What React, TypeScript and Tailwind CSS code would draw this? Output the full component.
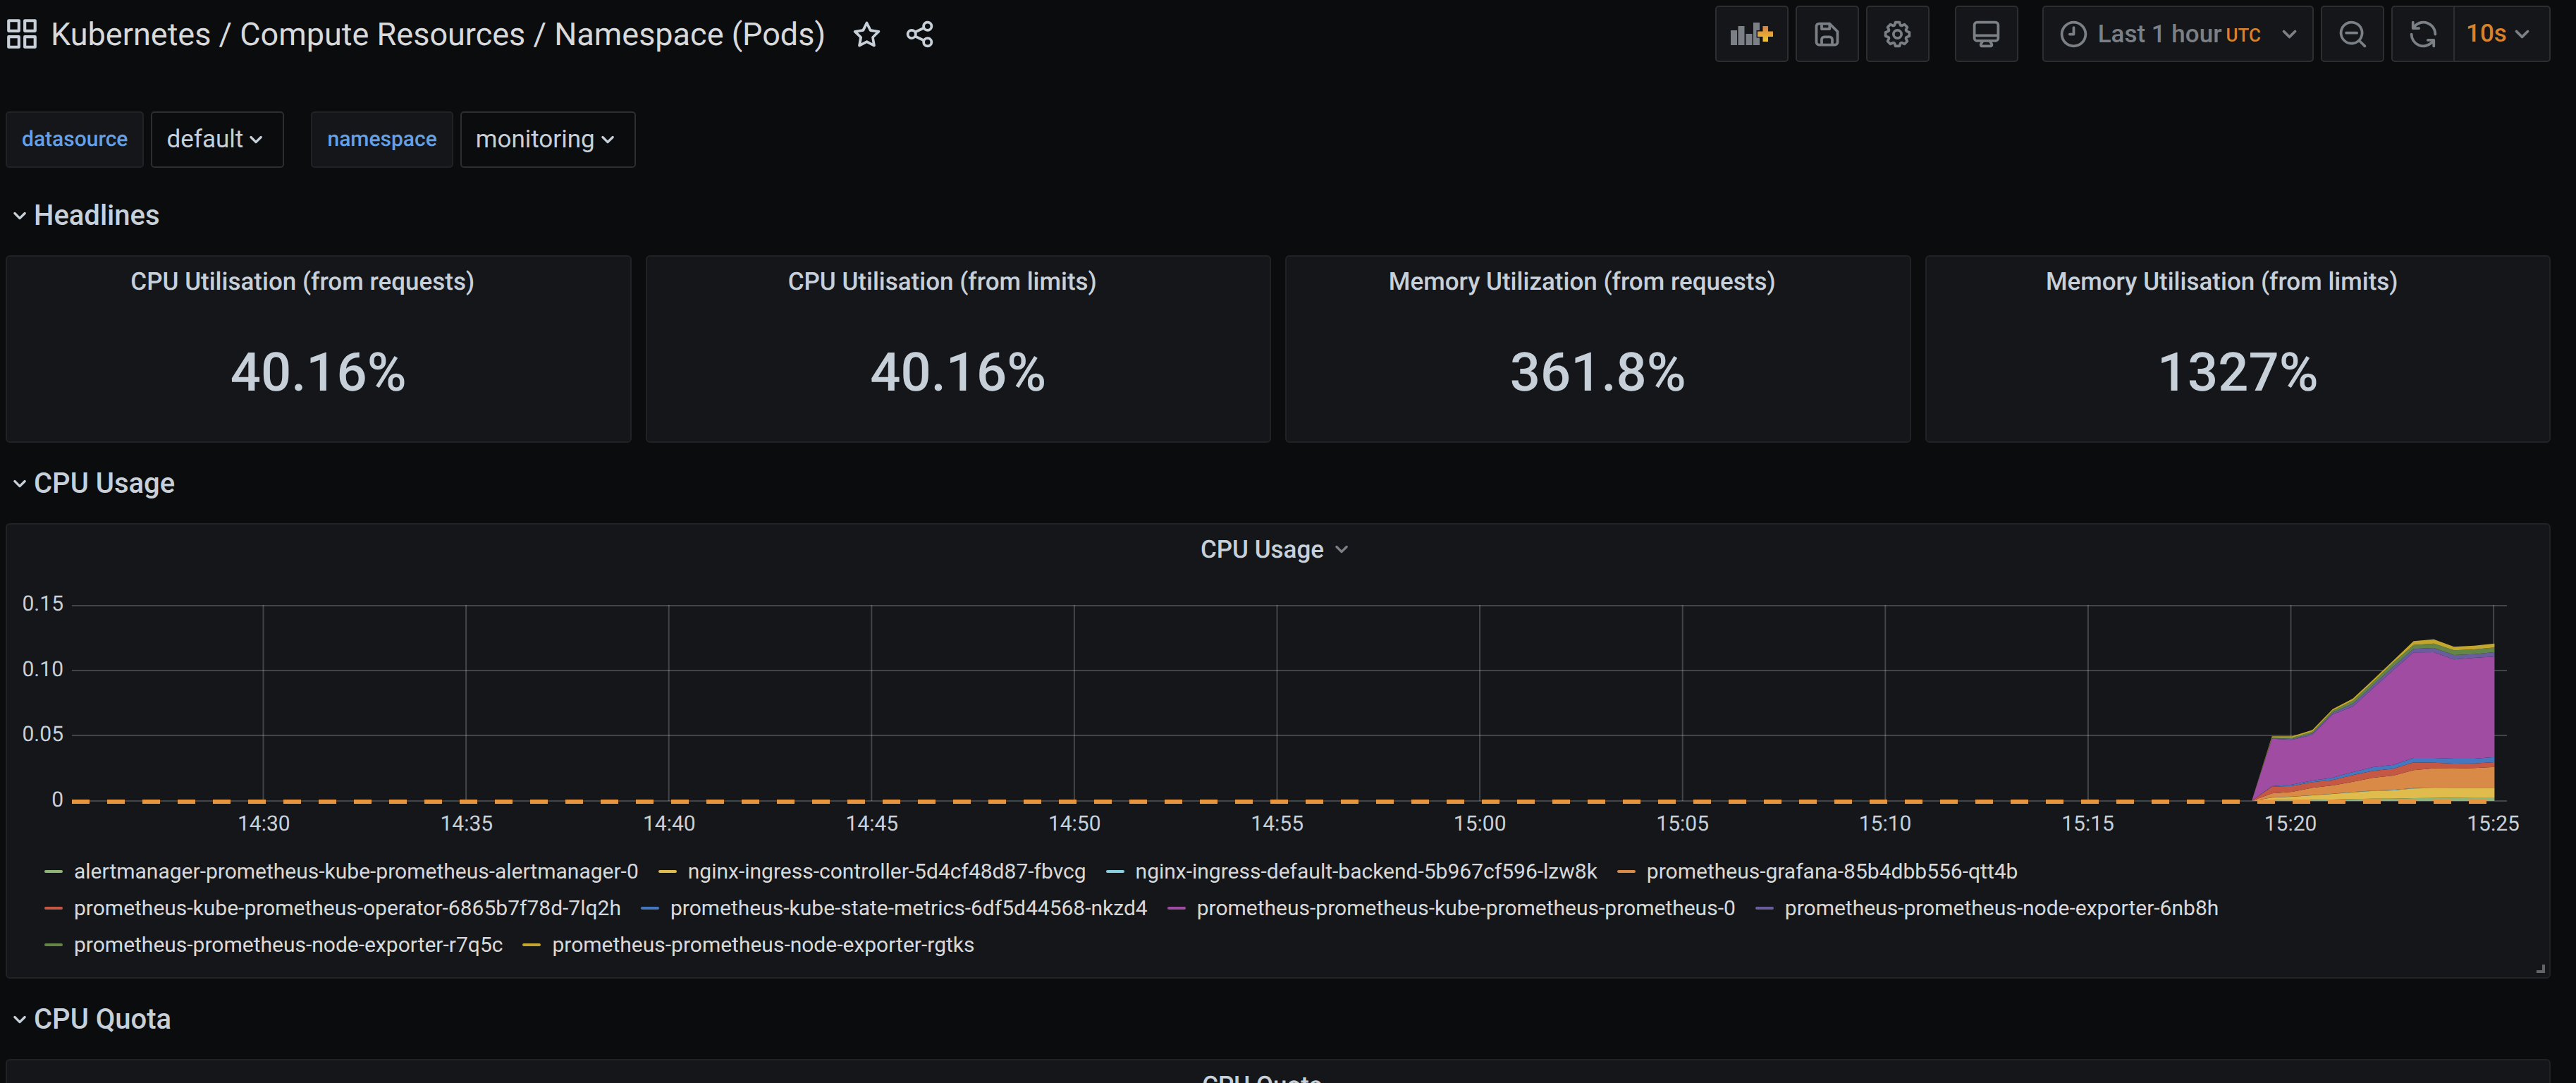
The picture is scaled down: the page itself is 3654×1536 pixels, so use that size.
import type { ReactNode } from "react";

const ICONS = {
  apps: "M10,13H3a1,1,0,0,0-1,1v7a1,1,0,0,0,1,1h7a1,1,0,0,0,1-1V14A1,1,0,0,0,10,13ZM9,20H4V15H9ZM21,2H14a1,1,0,0,0-1,1v7a1,1,0,0,0,1,1h7a1,1,0,0,0,1-1V3A1,1,0,0,0,21,2ZM20,9H15V4h5Zm1,4H14a1,1,0,0,0-1,1v7a1,1,0,0,0,1,1h7a1,1,0,0,0,1-1V14A1,1,0,0,0,21,13Zm-1,7H15V15h5ZM10,2H3A1,1,0,0,0,2,3v7a1,1,0,0,0,1,1h7a1,1,0,0,0,1-1V3A1,1,0,0,0,10,2ZM9,9H4V4H9Z",
  star: "M22,9.67A1,1,0,0,0,21.14,9l-5.69-.83L12.9,3a1,1,0,0,0-1.8,0L8.55,8.16,2.86,9a1,1,0,0,0-.81.68,1,1,0,0,0,.25,1l4.13,4-1,5.68A1,1,0,0,0,6.9,21.44L12,18.77l5.1,2.67a.93.93,0,0,0,.46.12,1,1,0,0,0,.59-.19,1,1,0,0,0,.4-1l-1-5.68,4.13-4A1,1,0,0,0,22,9.67Zm-6.15,4a1,1,0,0,0-.29.88l.72,4.2-3.76-2a1.06,1.06,0,0,0-.94,0l-3.76,2,.72-4.2a1,1,0,0,0-.29-.88l-3-3,4.21-.61a1,1,0,0,0,.76-.55L12,5.7l1.88,3.82a1,1,0,0,0,.76.55l4.21.61Z",
  share: "M18,14a4,4,0,0,0-3.08,1.48l-5.1-2.35a3.64,3.64,0,0,0,0-2.26l5.1-2.35A4,4,0,1,0,14,6a4.17,4.17,0,0,0,.07.71L8.79,9.14a4,4,0,1,0,0,5.72l5.28,2.43A4.17,4.17,0,0,0,14,18a4,4,0,1,0,4-4ZM18,4a2,2,0,1,1-2,2A2,2,0,0,1,18,4ZM6,14a2,2,0,1,1,2-2A2,2,0,0,1,6,14Zm12,6a2,2,0,1,1,2-2A2,2,0,0,1,18,20Z",
  save: "M20.71,9.29l-6-6a1,1,0,0,0-.32-.21A1.09,1.09,0,0,0,14,3H6A3,3,0,0,0,3,6V18a3,3,0,0,0,3,3H18a3,3,0,0,0,3-3V10A1,1,0,0,0,20.71,9.29ZM9,5h4V7H9Zm6,14H9V16a1,1,0,0,1,1-1h4a1,1,0,0,1,1,1Zm4-1a1,1,0,0,1-1,1H17V16a3,3,0,0,0-3-3H10a3,3,0,0,0-3,3v3H6a1,1,0,0,1-1-1V6A1,1,0,0,1,6,5H7V8A1,1,0,0,0,8,9h6a1,1,0,0,0,1-1V6.41l4,4Z",
  cog: "M21.32,9.55l-1.89-.63.89-1.78A1,1,0,0,0,20.13,6L18,3.87a1,1,0,0,0-1.15-.19l-1.78.89-.63-1.89A1,1,0,0,0,13.5,2h-3a1,1,0,0,0-.95.68L8.92,4.57,7.14,3.68A1,1,0,0,0,6,3.87L3.87,6a1,1,0,0,0-.19,1.15l.89,1.78-1.89.63A1,1,0,0,0,2,10.5v3a1,1,0,0,0,.68.95l1.89.63-.89,1.78A1,1,0,0,0,3.87,18L6,20.13a1,1,0,0,0,1.15.19l1.78-.89.63,1.89a1,1,0,0,0,.95.68h3a1,1,0,0,0,.95-.68l.63-1.89,1.78.89A1,1,0,0,0,18,20.13L20.13,18a1,1,0,0,0,.19-1.15l-.89-1.78,1.89-.63A1,1,0,0,0,22,13.5v-3A1,1,0,0,0,21.32,9.55ZM20,12.78l-1.2.4A2,2,0,0,0,17.64,16l.57,1.14-1.1,1.1L16,17.64a2,2,0,0,0-2.79,1.16l-.4,1.2H11.22l-.4-1.2A2,2,0,0,0,8,17.64l-1.14.57-1.1-1.1L6.36,16A2,2,0,0,0,5.2,13.18L4,12.78V11.22l1.2-.4A2,2,0,0,0,6.36,8L5.79,6.89l1.1-1.1L8,6.36A2,2,0,0,0,10.82,5.2l.4-1.2h1.56l.4,1.2A2,2,0,0,0,16,6.36l1.14-.57,1.1,1.1L17.64,8a2,2,0,0,0,1.16,2.79l1.2.4ZM12,8a4,4,0,1,0,4,4A4,4,0,0,0,12,8Zm0,6a2,2,0,1,1,2-2A2,2,0,0,1,12,14Z",
  monitor: "M19,2H5A3,3,0,0,0,2,5V15a3,3,0,0,0,3,3H7.64l-.58,1a2,2,0,0,0,0,2,2,2,0,0,0,1.75,1h6.46A2,2,0,0,0,17,21a2,2,0,0,0,0-2l-.59-1H19a3,3,0,0,0,3-3V5A3,3,0,0,0,19,2ZM8.77,20,10,18H14l1.2,2ZM20,15a1,1,0,0,1-1,1H5a1,1,0,0,1-1-1V14H20Zm0-3H4V5A1,1,0,0,1,5,4H19a1,1,0,0,1,1,1Z",
  clock: "M12,2A10,10,0,1,0,22,12,10,10,0,0,0,12,2Zm0,18a8,8,0,1,1,8-8A8,8,0,0,1,12,20ZM12,6a1,1,0,0,0-1,1v4H9a1,1,0,0,0,0,2h3a1,1,0,0,0,1-1V7A1,1,0,0,0,12,6Z",
  down: "M17,9.17a1,1,0,0,0-1.41,0L12,12.71,8.46,9.17a1,1,0,0,0-1.41,0,1,1,0,0,0,0,1.42l4.24,4.24a1,1,0,0,0,1.42,0L17,10.59A1,1,0,0,0,17,9.17Z",
  zoomOut: "M21.71,20.29,18,16.61A9,9,0,1,0,16.61,18l3.68,3.68a1,1,0,0,0,1.42,0A1,1,0,0,0,21.71,20.29ZM11,18a7,7,0,1,1,7-7A7,7,0,0,1,11,18Zm4-8H7a1,1,0,0,0,0,2h8a1,1,0,0,0,0-2Z",
  sync: "M19.91,15.51H15.38a1,1,0,0,0,0,2h2.4A8,8,0,0,1,4,12a1,1,0,0,0-2,0,10,10,0,0,0,16.88,7.23V21a1,1,0,0,0,2,0V16.5A1,1,0,0,0,19.91,15.51ZM12,2A10,10,0,0,0,5.12,4.77V3a1,1,0,0,0-2,0V7.5a1,1,0,0,0,1,1h4.5a1,1,0,0,0,0-2H6.22A8,8,0,0,1,20,12a1,1,0,0,0,2,0A10,10,0,0,0,12,2Z",
};

function Icon({ name, className = "size-[45px]" }: { name: keyof typeof ICONS; className?: string }) {
  return (
    <svg viewBox="0 0 24 24" fill="currentColor" aria-hidden="true" className={`shrink-0 ${className}`}>
      <path d={ICONS[name]} />
    </svg>
  );
}

function AddPanelIcon() {
  return (
    <svg viewBox="0 0 60 32" className="h-8 w-[60px]" aria-hidden="true">
      <defs>
        <linearGradient id="plus" x1="0" y1="0" x2="0" y2="1">
          <stop offset="0" stopColor="#d9803f" />
          <stop offset="1" stopColor="#efc52f" />
        </linearGradient>
      </defs>
      <path fill="currentColor" d="M0 11h9v21H0zM10.5 5h9v27h-9zM21.500 16h9v16h-9zM32 0h9v32h-9z" />
      <path
        d="M45.500 5h7.500v7.500h7V20h-7v7h-7.500v-7H38v-7.500h7.500z"
        fill="url(#plus)"
        stroke="#141619"
        strokeWidth="3"
        paintOrder="stroke"
      />
    </svg>
  );
}

function ToolButton({ label, className = "w-[90px]", children }: { label: string; className?: string; children: ReactNode }) {
  return (
    <button
      type="button"
      aria-label={label}
      className={`flex h-20 items-center justify-center rounded-[5px] border-2 border-[#2c2e31] bg-[#141619] ${className}`}
    >
      {children}
    </button>
  );
}

function Header() {
  return (
    <header className="flex h-24 items-center justify-between">
      <div className="flex items-center text-[#c7d0d9]">
        <Icon name="apps" className="-ml-0.5 size-[50px]" />
        <h1 className="ml-4 text-[45px] leading-none text-[#d8d9da]">
          Kubernetes / Compute Resources / Namespace (Pods)
        </h1>
        <button type="button" aria-label="Mark as favorite" className="ml-9">
          <Icon name="star" />
        </button>
        <button type="button" aria-label="Share dashboard" className="ml-[30px]">
          <Icon name="share" />
        </button>
      </div>

      <div className="flex items-center text-[#7b8087]">
        <div className="flex gap-[10px]">
          <ToolButton label="Add panel" className="w-[104px]">
            <AddPanelIcon />
          </ToolButton>
          <ToolButton label="Save dashboard">
            <Icon name="save" />
          </ToolButton>
          <ToolButton label="Dashboard settings">
            <Icon name="cog" />
          </ToolButton>
        </div>
        <div className="ml-9">
          <ToolButton label="Cycle view mode">
            <Icon name="monitor" />
          </ToolButton>
        </div>
        <div className="ml-[34px] flex gap-[10px]">
          <ToolButton label="Time range: last 1 hour UTC" className="pr-[10px] pl-5">
            <Icon name="clock" />
            <span className="ml-3 text-[35px] leading-none font-medium">Last 1 hour</span>
            <span className="mt-1 ml-[6px] text-[26px] leading-none font-medium text-[#d9822b]">UTC</span>
            <Icon name="down" className="ml-[18px] size-[45px]" />
          </ToolButton>
          <ToolButton label="Zoom out time range">
            <Icon name="zoomOut" />
          </ToolButton>
          <div className="flex h-20 overflow-hidden rounded-[5px] border-2 border-[#2c2e31] bg-[#141619]">
            <button
              type="button"
              aria-label="Refresh dashboard"
              className="flex w-[88px] items-center justify-center border-r-2 border-[#2c2e31]"
            >
              <Icon name="sync" />
            </button>
            <div className="relative flex">
              <select
                aria-label="Refresh interval"
                className="appearance-none bg-transparent pr-[60px] pl-4 text-[35px] font-medium text-[#d9822b]"
              >
                <option>10s</option>
              </select>
              <Icon name="down" className="pointer-events-none absolute top-4 right-4 size-[45px]" />
            </div>
          </div>
        </div>
      </div>
    </header>
  );
}

function Variable({ name, value }: { name: string; value: string }) {
  return (
    <div className="flex gap-[10px]">
      <label
        htmlFor={name}
        className="flex h-20 items-center rounded-[5px] border-2 border-[#202226] bg-[#141619] px-[21px] text-[30px] leading-none font-medium text-[#64a0e6]"
      >
        {name}
      </label>
      <div className="relative flex text-[#c7d0d9]">
        <select
          id={name}
          className="h-20 appearance-none rounded-[5px] border-2 border-[#2c2e31] bg-[#0b0c0e] pr-[56px] pl-5 text-[35px]"
        >
          <option>{value}</option>
        </select>
        <Icon name="down" className="pointer-events-none absolute top-5 right-5 size-10" />
      </div>
    </div>
  );
}

function RowTitle({ children }: { children: ReactNode }) {
  return (
    <h2 className="flex h-[114px] items-center pt-0.5 text-[40px] leading-none font-medium text-[#c7d0d9]">
      <button type="button" className="flex items-center">
        <Icon name="down" className="size-10" />
        {children}
      </button>
    </h2>
  );
}

function Panel({ title, chevron = false, children }: { title: string; chevron?: boolean; children?: ReactNode }) {
  return (
    <section className="relative rounded-[6px] border-2 border-[#202226] bg-[#141619]">
      <h3 className="flex h-[70px] items-center justify-center text-[35px] leading-none font-medium text-[#c7d0d9]">
        {title}
        <Icon name="down" className={chevron ? "ml-[5px] size-10 text-[#7b8087]" : "invisible ml-[5px] size-10"} />
      </h3>
      {children}
    </section>
  );
}

const STATS = [
  { title: "CPU Utilisation (from requests)", value: "40.16%" },
  { title: "CPU Utilisation (from limits)", value: "40.16%" },
  { title: "Memory Utilization (from requests)", value: "361.8%" },
  { title: "Memory Utilisation (from limits)", value: "1327%" },
];

// Cumulative top edge of each stacked band, one value per 30 s sample.
const BANDS = [
  { name: "alertmanager-prometheus-kube-prometheus-alertmanager-0", color: "#8fb477", tops: [0, 4, 4, 5, 6, 8, 10, 10, 12, 13, 14, 15, 15] },
  { name: "nginx-ingress-controller-5d4cf48d87-fbvcg", color: "#dfbc4b", tops: [0, 14, 18, 24, 30, 37, 43, 45, 53, 55, 54, 54, 54] },
  { name: "nginx-ingress-default-backend-5b967cf596-lzw8k", color: "#88cfe0", tops: [0, 15, 19, 25, 31, 38, 44, 47, 55, 57, 56, 56, 56] },
  { name: "prometheus-grafana-85b4dbb556-qtt4b", color: "#d98a47", tops: [0, 32, 39, 56, 66, 82, 99, 108, 131, 139, 138, 140, 145] },
  { name: "prometheus-kube-prometheus-operator-6865b7f78d-7lq2h", color: "#c55844", tops: [0, 61, 64, 80, 89, 110, 128, 137, 164, 163, 159, 160, 165] },
  { name: "prometheus-kube-state-metrics-6df5d44568-nkzd4", color: "#4678c2", tops: [0, 63, 70, 87, 99, 123, 144, 154, 183, 183, 180, 180, 187] },
  { name: "prometheus-prometheus-kube-prometheus-prometheus-0", color: "#a14ca3", tops: [0, 265, 260, 281, 368, 402, 480, 557, 632, 633, 602, 609, 614] },
  { name: "prometheus-prometheus-node-exporter-6nb8h", color: "#6a5d9d", tops: [0, 267, 264, 288, 376, 414, 493, 572, 647, 651, 621, 625, 633] },
  { name: "prometheus-prometheus-node-exporter-r7q5c", color: "#648547", tops: [0, 271, 269, 295, 384, 427, 507, 589, 664, 670, 641, 645, 653] },
  { name: "prometheus-prometheus-node-exporter-rgtks", color: "#c2a62e", tops: [0, 275, 275, 302, 391, 436, 516, 598, 680, 688, 656, 661, 670] },
];

const TIMES = ["14:30", "14:35", "14:40", "14:45", "14:50", "14:55", "15:00", "15:05", "15:10", "15:15", "15:20", "15:25"];

const BASE = 278;
const sampleX = (i: number) => 3092 + i * 28.7;
const bandPath = (index: number) => {
  const upper = BANDS[index].tops.map((v, i) => `${sampleX(i)},${BASE - v / 3}`);
  const lower = (index > 0 ? BANDS[index - 1].tops : BANDS[0].tops.map(() => 0))
    .map((v, i) => `${sampleX(i)},${BASE - v / 3}`)
    .reverse();
  return [...upper, ...lower].join(" ");
};

function Chart() {
  return (
    <div className="px-5 pt-6">
      <div className="flex">
        <div className="mt-1 flex h-[308px] w-[72px] shrink-0 flex-col justify-between pr-3 text-right text-[30px] leading-[30px] text-[#c7d0d9]">
          <span>0.15</span>
          <span>0.10</span>
          <span>0.05</span>
          <span>0</span>
        </div>
        <svg
          viewBox="0 0 3454 284"
          preserveAspectRatio="none"
          role="img"
          aria-label="CPU usage by pod"
          className="mt-5 mr-10 h-[284px] min-w-0 flex-1"
        >
          {[1, 93, 185, 278].map((y) => (
            <path key={y} d={`M0 ${y}H3454`} stroke="#ffffff" strokeOpacity="0.2" strokeWidth="2" />
          ))}
          {TIMES.map((t, i) => (
            <path key={t} d={`M${271.5 + i * 287.6} 0V278`} stroke="#ffffff" strokeOpacity="0.2" strokeWidth="2" />
          ))}
          {BANDS.map((b, i) => (
            <polygon key={b.name} points={bandPath(i)} fill={b.color} />
          ))}
          <path d="M0 279H3437" stroke="#e6963e" strokeWidth="6" strokeDasharray="25 25" />
        </svg>
      </div>
      <div className="mt-1 mr-[22px] ml-[307px] flex justify-between text-[30px] leading-[30px] text-[#c7d0d9]">
        {TIMES.map((t) => (
          <span key={t}>{t}</span>
        ))}
      </div>
      <ul className="mt-[26px] flex flex-wrap gap-x-7 pr-10 pb-5 pl-[33px] text-[30px] leading-[52px] text-[#d8d9da]">
        {BANDS.map((b) => (
          <li key={b.name}>
            <button type="button" className="flex items-center gap-4">
              <span className="h-1 w-[26px] rounded-full" style={{ backgroundColor: b.color }} />
              {b.name}
            </button>
          </li>
        ))}
      </ul>
      <svg viewBox="0 0 12 12" className="absolute right-[6px] bottom-[6px] size-3" aria-hidden="true">
        <path d="M10 0V10H0" fill="none" stroke="#626365" strokeWidth="4" />
      </svg>
    </div>
  );
}

export default function App() {
  return (
    <div className="h-screen overflow-hidden bg-[#0b0c0e] pr-9 pl-2 font-['Roboto',sans-serif] [text-rendering:geometricPrecision]">
      <Header />
      <nav aria-label="Dashboard variables" className="flex gap-[38px] pt-[62px]">
        <Variable name="datasource" value="default" />
        <Variable name="namespace" value="monitoring" />
      </nav>
      <main className="pt-[10px]">
        <RowTitle>Headlines</RowTitle>
        <div className="grid grid-cols-4 gap-5">
          {STATS.map((s) => (
            <Panel key={s.title} title={s.title}>
              <p className="flex h-[192px] items-center justify-center pb-1 text-[76px] leading-none font-medium text-[#c7d0d9]">
                {s.value}
              </p>
            </Panel>
          ))}
        </div>
        <RowTitle>CPU Usage</RowTitle>
        <Panel title="CPU Usage" chevron>
          <Chart />
        </Panel>
        <RowTitle>CPU Quota</RowTitle>
        <Panel title="CPU Quota" />
      </main>
    </div>
  );
}
